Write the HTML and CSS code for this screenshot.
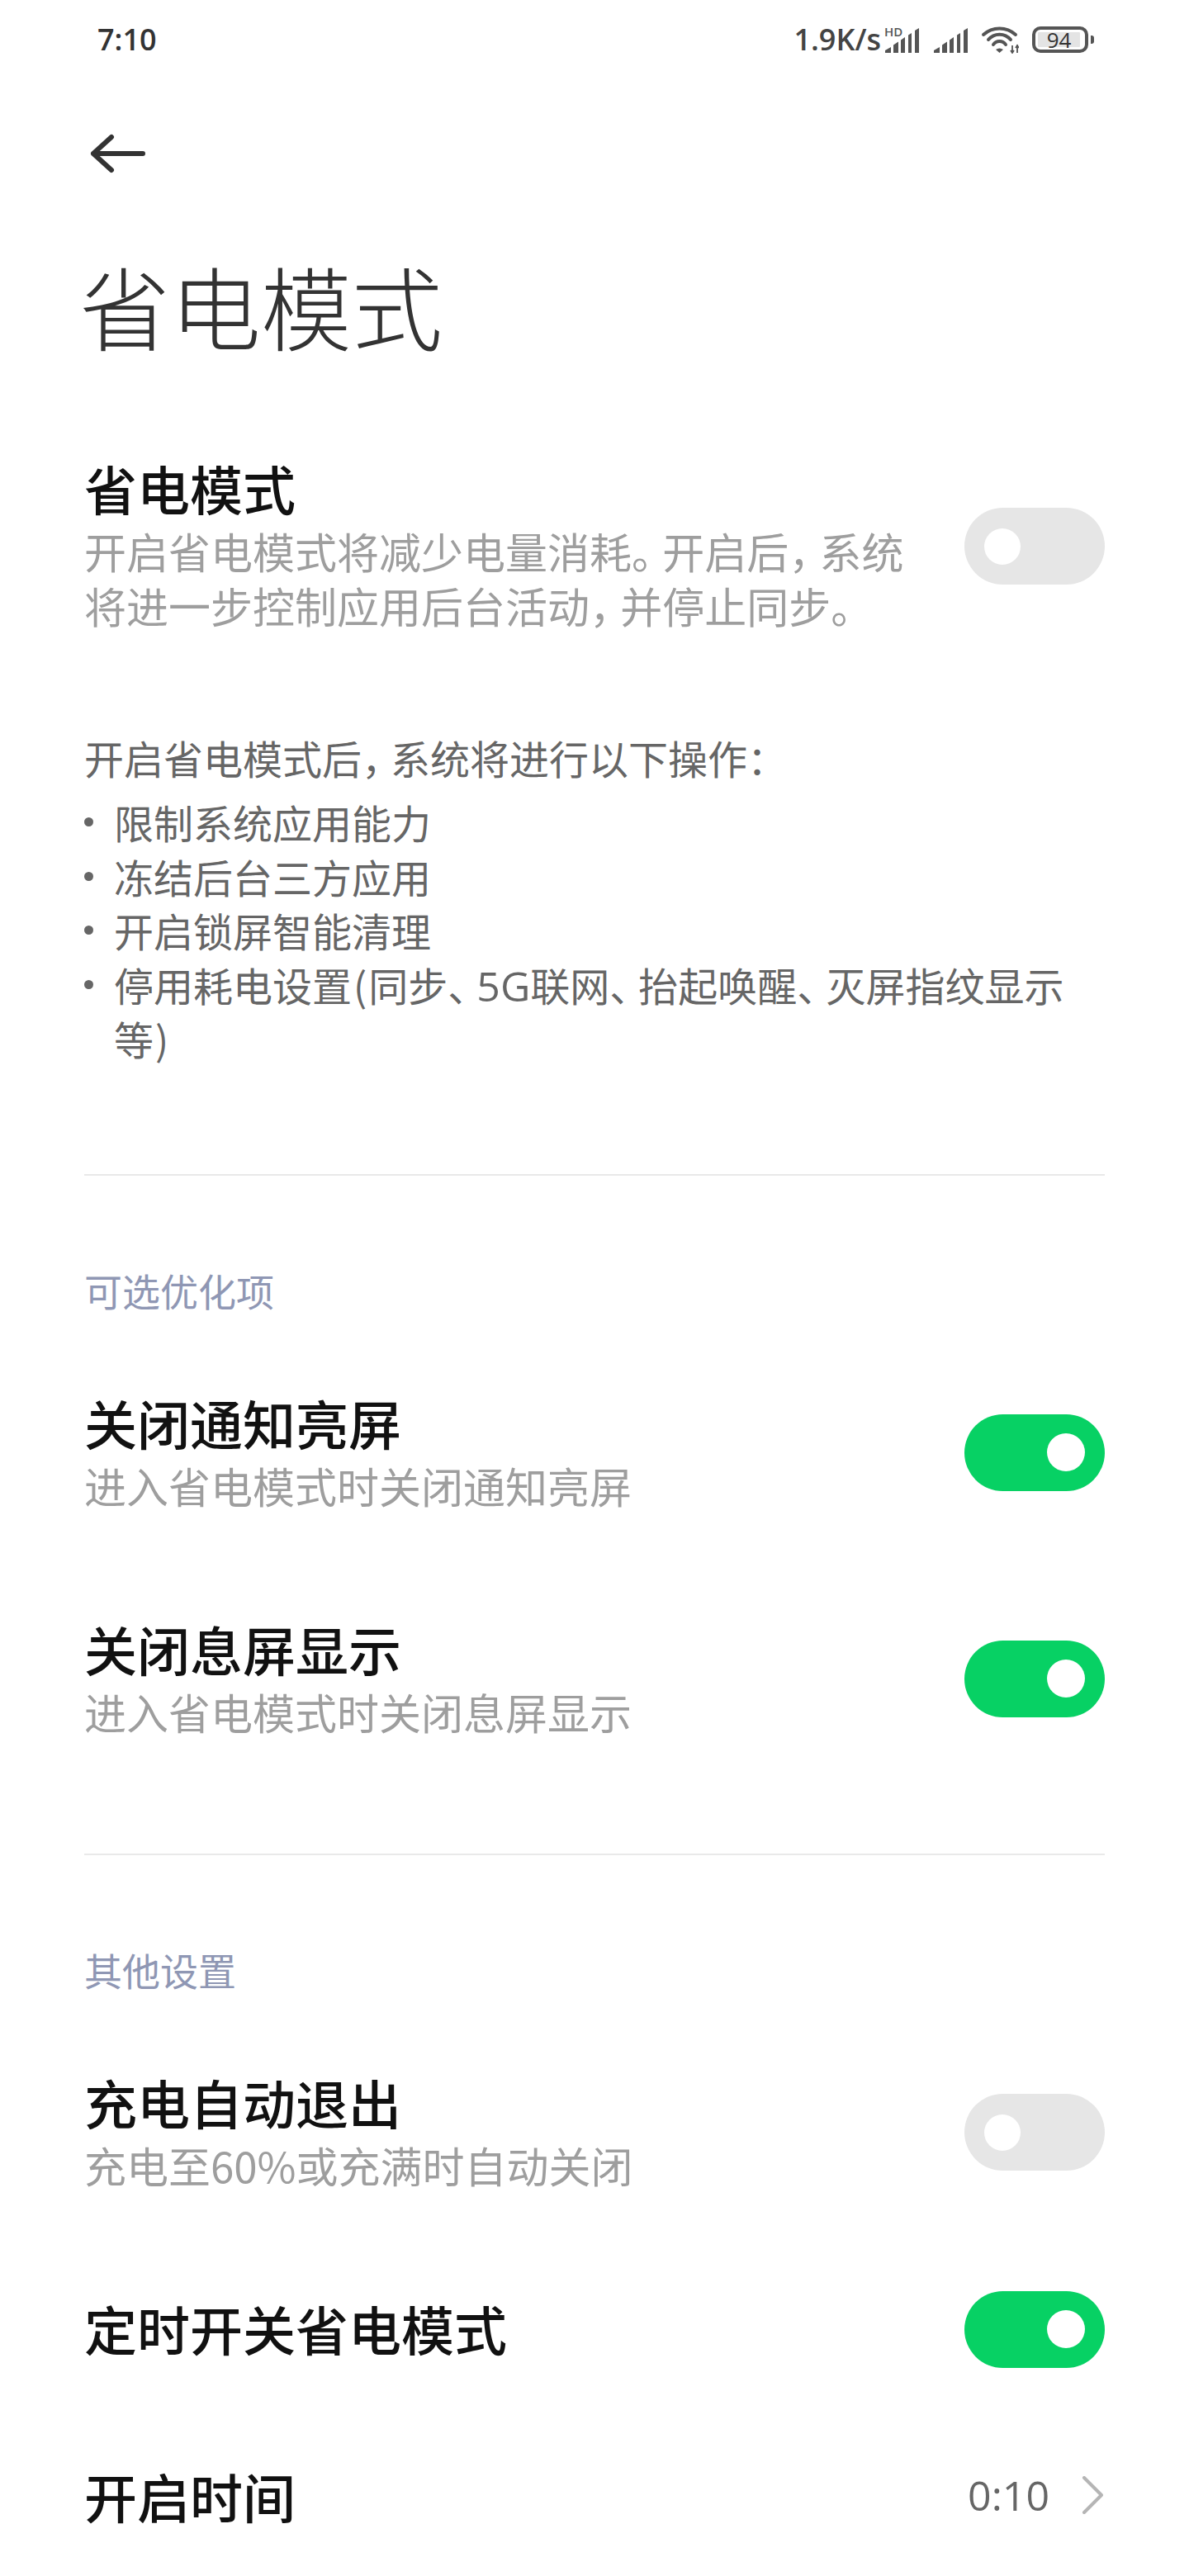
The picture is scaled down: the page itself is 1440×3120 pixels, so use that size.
FILE: index.html
```html
<!DOCTYPE html>
<html lang="zh-CN">
<head>
<meta charset="utf-8">
<title>省电模式</title>
<link rel="stylesheet" href="styles.css">
</head>
<body>
<div class="page">
  <header class="status">
    <span class="clock">7:10</span>
    <div class="status-right">
      <span class="speed">1.9K/s</span>
      <span class="sig-wrap">
        <span class="hd">HD</span>
        <svg width="42" height="30" viewBox="0 0 42 30"><path d="M1 30V27L8 23V30Z M11 30V20.5L17 16.5V30Z M20 30V14.5L25 11V30Z M29 30V8.5L33 6V30Z M37 30V3L42 0V30Z" fill="#555"/></svg>
      </span>
      <svg class="sig" width="42" height="30" viewBox="0 0 42 30"><path d="M1 30V27L8 23V30Z M11 30V20.5L17 16.5V30Z M20 30V14.5L25 11V30Z M29 30V8.5L33 6V30Z M37 30V3L42 0V30Z" fill="#555"/></svg>
      <svg class="wifi" width="46" height="34" viewBox="0 0 46 34">
        <path d="M3 11 A29 29 0 0 1 42 11 M9 17 A17.5 17.5 0 0 1 36 17 M15 23 A9 9 0 0 1 30 23" fill="none" stroke="#555" stroke-width="4" stroke-linecap="round"/>
        <path d="M18 29 Q22.500 26 27 29 L22.500 33Z" fill="#555"/>
        <path d="M38 24v10 M36 30l2 3 2-3 M44 33v-10 M42 27l2-3 2 3" stroke="#555" stroke-width="1.800" fill="none"/>
      </svg>
      <div class="battery">
        <div class="battery-body"><span class="battery-level">94</span></div>
        <span class="battery-nub"></span>
      </div>
    </div>
  </header>

  <button class="back" aria-label="返回">
    <svg width="68" height="48" viewBox="0 0 68 48"><path d="M26 4 L4 24 L26 44 M4 24 H64" fill="none" stroke="#333" stroke-width="6" stroke-linecap="round" stroke-linejoin="round"/></svg>
  </button>

  <h1 class="title">省电模式</h1>

  <section class="row row-first">
    <div class="row-text">
      <div class="row-title">省电模式</div>
      <p class="row-sub">开启省电模式将减少电量消耗<span class="pn">。</span>开启后<span class="pn">，</span>系统<br>将进一步控制应用后台活动<span class="pn">，</span>并停止同步。</p>
    </div>
    <span class="toggle"></span>
  </section>

  <p class="intro">开启省电模式后<span class="pn">，</span>系统将进行以下操作：</p>
  <ul class="list">
    <li>限制系统应用能力</li>
    <li>冻结后台三方应用</li>
    <li>开启锁屏智能清理</li>
    <li>停用耗电设置<span class="paren">(</span>同步<span class="pn">、</span><span class="latin">5G</span>联网<span class="pn">、</span>抬起唤醒<span class="pn">、</span>灭屏指纹显示等<span class="paren">)</span></li>
  </ul>

  <hr class="divider div-1">
  <h2 class="section-label">可选优化项</h2>

  <section class="row row-a">
    <div class="row-text">
      <div class="row-title">关闭通知亮屏</div>
      <p class="row-sub">进入省电模式时关闭通知亮屏</p>
    </div>
    <span class="toggle on"></span>
  </section>
  <section class="row row-b">
    <div class="row-text">
      <div class="row-title">关闭息屏显示</div>
      <p class="row-sub">进入省电模式时关闭息屏显示</p>
    </div>
    <span class="toggle on"></span>
  </section>

  <hr class="divider div-2">
  <h2 class="section-label">其他设置</h2>

  <section class="row row-a">
    <div class="row-text">
      <div class="row-title">充电自动退出</div>
      <p class="row-sub">充电至60%或充满时自动关闭</p>
    </div>
    <span class="toggle"></span>
  </section>
  <section class="row row-single row-c">
    <div class="row-text"><div class="row-title">定时开关省电模式</div></div>
    <span class="toggle on"></span>
  </section>
  <section class="row row-single row-d">
    <div class="row-text"><div class="row-title">开启时间</div></div>
    <div class="row-value">
      <span class="value">0:10</span>
      <svg width="26" height="46" viewBox="0 0 26 46"><path d="M3 2 L24 23 L3 44" fill="none" stroke="#b5b5b5" stroke-width="4" stroke-linecap="round" stroke-linejoin="round"/></svg>
    </div>
  </section>
</div>
</body>
</html>
```
FILE: styles.css
```css
* { box-sizing: border-box; }
html, body { margin: 0; padding: 0; background: #fff; }
body { font-family: "Noto Sans CJK SC", "Noto Sans", sans-serif; color: #000; }
.page { width: 1440px; height: 3120px; overflow: hidden; padding: 0 102px; }

.status { height: 96px; margin: 0 -102px; padding: 0 115px 0 118px; display: flex; align-items: center; justify-content: space-between; }
.clock { font: 600 36px/1 "Open Sans", sans-serif; color: #333; }
.status-right { display: flex; align-items: center; }
.speed { font: 600 36px/1 "Open Sans", sans-serif; color: #444; margin-right: 4px; }
.sig-wrap { position: relative; display: flex; width: 42px; height: 30px; margin-top: 1px; }
.hd { position: absolute; left: 0; top: -3px; font: 600 15px/15px "Open Sans", sans-serif; color: #555; }
.sig { margin-left: 17px; margin-top: 1px; }
.wifi { margin: 0 16px; }
.battery { display: flex; align-items: center; gap: 3px; }
.battery-body { width: 68px; height: 32px; border: 4px solid #555; border-radius: 10px; padding: 3px 6px 3px 3px; display: flex; }
.battery-level { flex: 1; background: #e4e4e4; border-radius: 1px; font: 400 26px/18px "Open Sans", sans-serif; color: #333; text-align: center; }
.battery-nub { width: 4px; height: 10px; background: #555; border-radius: 0 3px 3px 0; }

.back { display: block; padding: 0; margin: 66px 0 0 7px; border: 0; background: none; line-height: 0; }
.title { margin: 99px 0 0 -6px; font-size: 110px; font-weight: 300; line-height: 120px; color: #333; }

.pn { letter-spacing: -0.27em; }
.paren { padding: 0 2px; }
.latin { font-family: "Open Sans", sans-serif; font-size: 50px; line-height: 0; }

.row { display: flex; align-items: center; justify-content: space-between; }
.row-text { min-width: 0; }
.row-title { font-size: 64px; line-height: 76px; font-weight: 500; color: #111; }
.row-sub { margin: 6px 0 0; font-size: 51px; line-height: 66px; color: #9e9e9e; }
.row-first { margin-top: 123px; }

.toggle { position: relative; flex: none; width: 170px; height: 93px; margin-top: 4px; border-radius: 47px; background: #e6e6e6; }
.toggle::after { content: ""; position: absolute; left: 24px; top: 25px; width: 44px; height: 44px; border-radius: 50%; background: #fff; }
.toggle.on { background: #07d164; }
.toggle.on::after { left: 100px; top: 23px; width: 46px; height: 46px; }

.intro { margin: 118px 0 0; font-size: 48px; line-height: 66px; color: #666; }
.list { list-style: none; margin: 13px 0 0; padding: 0 36px; }
.list li { position: relative; font-size: 48px; line-height: 65.5px; color: #666; }
.list li::before { content: ""; position: absolute; left: -36px; top: 27px; width: 11px; height: 11px; border-radius: 50%; background: #666; }

.divider { height: 2px; border: 0; margin: 0; background: #e9e9e9; }
.div-1 { margin-top: 131px; }
.div-2 { margin-top: 139px; }
.section-label { margin: 105px 0 0; font-size: 46px; line-height: 66px; font-weight: 400; color: #8f97b4; }

.row-a { margin-top: 89px; }
.row-b { margin-top: 126px; }
.row-single { height: 95px; }
.row-c { margin-top: 119px; }
.row-c .row-title { margin-bottom: 4px; }
.row-d { margin-top: 106px; }
.row-single .toggle { margin-top: 0; }
.row-value { display: flex; align-items: center; gap: 39px; margin-right: 2px; }
.value { font: 400 50px/1 "Open Sans", sans-serif; color: #666; }
```
